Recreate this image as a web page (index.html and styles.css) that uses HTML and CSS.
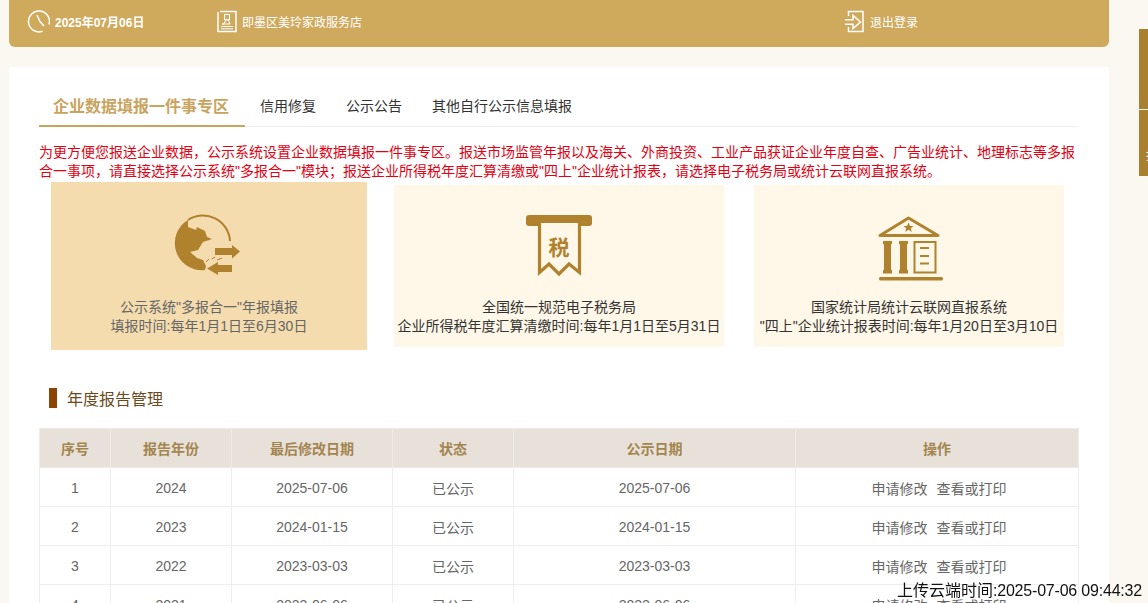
FILE: index.html
```html
<!DOCTYPE html>
<html lang="zh-CN">
<head>
<meta charset="utf-8">
<title>企业数据填报一件事专区</title>
<link rel="stylesheet" href="styles.css">
</head>
<body>
<header class="topbar">
  <div class="top-item top-date">
    <svg class="top-icon" width="24" height="24" viewBox="26 9 24 24"><path d="M49 24.500A10.500 10.500 0 1 0 42.500 31.300" class="line"/><path d="M37 15L40 21.500 44 26" class="line"/></svg>
    <span>2025年07月06日</span>
  </div>
  <div class="top-item top-shop">
    <svg class="top-icon" width="22" height="24" viewBox="216 9 22 24"><path d="M218 12V31.500H236V11.500H220" class="line"/><rect x="224.500" y="14.500" width="5" height="5" class="line-thin"/><path d="M224 24L225.500 20H228.500L230 24H222ZM221 26.500H233M221 28.800H233" class="line-thin"/></svg>
    <span>即墨区美玲家政服务店</span>
  </div>
  <div class="top-item top-exit">
    <svg class="top-icon" width="20" height="24" viewBox="844 9 20 24"><path d="M848.500 16V11.500H863V31.500H848.500V27" class="line"/><path d="M845 19.800H853V15.500L860.500 22 853 28.500V24.200H845" class="line"/></svg>
    <span>退出登录</span>
  </div>
</header>

<main class="panel">
  <nav class="tabs">
    <a class="tab tab-active">企业数据填报一件事专区</a>
    <a class="tab">信用修复</a>
    <a class="tab">公示公告</a>
    <a class="tab">其他自行公示信息填报</a>
  </nav>

  <p class="notice">为更方便您报送企业数据，公示系统设置企业数据填报一件事专区。报送市场监管年报以及海关、外商投资、工业产品获证企业年度自查、广告业统计、地理标志等多报合一事项，请直接选择公示系统"多报合一"模块；报送企业所得税年度汇算清缴或"四上"企业统计报表，请选择电子税务局或统计云联网直报系统。</p>

  <section class="cards">
    <div class="card card-active">
      <svg class="card-icon" width="76" height="68" viewBox="171 213 76 68">
        <path class="gold" d="M188 220A27 27 0 0 0 205 270L206 266 203 260 197 258 190 252 198 250 203 242 212 239 207 237 205 231 197 227 196 230 188 227Z"/>
        <path class="gold-line" d="M188 220A27 27 0 0 1 230 241"/>
        <path class="gold" d="M215 248H232V245L240 251.500 232 258.500V255H215ZM232 265H218V262L207 268.500 218 275V272H232Z"/>
        <path class="gold-thin" d="M206 262L209 259M212 259L215 257M217 260L222 258"/>
      </svg>
      <p class="card-text">公示系统"多报合一"年报填报<br>填报时间:每年1月1日至6月30日</p>
    </div>
    <div class="card card-tax">
      <svg class="card-icon" width="76" height="68" viewBox="521 213 76 68">
        <path class="gold" d="M529 215H589A3 3 0 0 1 592 218V224A3 3 0 0 1 589 226H581V223H538V226H529A3 3 0 0 1 526 224V218A3 3 0 0 1 529 215Z"/>
        <path class="gold-wide" d="M539.500 223V272.500L549 264 559 274 569 264 579.500 272.500V223"/>
        <text x="559" y="255" class="tax-char">税</text>
      </svg>
      <p class="card-text">全国统一规范电子税务局<br>企业所得税年度汇算清缴时间:每年1月1日至5月31日</p>
    </div>
    <div class="card card-stat">
      <svg class="card-icon" width="76" height="68" viewBox="871 213 76 68">
        <path class="gold-roof" d="M880 235.500L908.500 218 938 235.500Z"/>
        <path class="gold" d="M908.500 222.500L910 226H913.500L910.800 228.200 911.800 232 908.500 229.800 905.200 232 906.200 228.200 903.500 226H907ZM883 241H892V244H891V270H892V273.500H883V270H884V244H883ZM899 241H908V244H907V270H908V273.500H899V270H900V244H899ZM880 277H942A2 2 0 0 1 942 280.500H880A2 2 0 0 1 880 277Z"/>
        <path class="gold-line" d="M914.500 242H935.500V272.500H914.500ZM920 248H929M920 256H929M920 263.500H929"/>
      </svg>
      <p class="card-text">国家统计局统计云联网直报系统<br>"四上"企业统计报表时间:每年1月20日至3月10日</p>
    </div>
  </section>

  <h2 class="section-title">年度报告管理</h2>

  <table class="report-table">
    <colgroup>
      <col class="col-no"><col class="col-year"><col class="col-mod"><col class="col-state"><col class="col-pub"><col class="col-act">
    </colgroup>
    <thead>
      <tr><th>序号</th><th>报告年份</th><th>最后修改日期</th><th>状态</th><th>公示日期</th><th>操作</th></tr>
    </thead>
    <tbody>
      <tr><td>1</td><td>2024</td><td>2025-07-06</td><td>已公示</td><td>2025-07-06</td><td class="act-cell"><a class="act">申请修改</a><a class="act">查看或打印</a></td></tr>
      <tr><td>2</td><td>2023</td><td>2024-01-15</td><td>已公示</td><td>2024-01-15</td><td class="act-cell"><a class="act">申请修改</a><a class="act">查看或打印</a></td></tr>
      <tr><td>3</td><td>2022</td><td>2023-03-03</td><td>已公示</td><td>2023-03-03</td><td class="act-cell"><a class="act">申请修改</a><a class="act">查看或打印</a></td></tr>
      <tr><td>4</td><td>2021</td><td>2022-06-06</td><td>已公示</td><td>2022-06-06</td><td class="act-cell"><a class="act">申请修改</a><a class="act">查看或打印</a></td></tr>
    </tbody>
  </table>
</main>

<aside class="side-tabs">
  <div class="side-tab side-one"></div>
  <div class="side-tab side-two">报</div>
</aside>

<div class="stamp">上传云端时间<span class="stamp-time">:2025-07-06 09:44:32</span></div>
</body>
</html>
```

FILE: styles.css
```css
* { box-sizing: border-box; }
html, body { height: 100%; overflow: hidden; }
body {
  margin: 0;
  background: #fbf8f1;
  font-family: "Liberation Sans", "Noto Sans CJK SC", sans-serif;
  font-size: 14px;
  color: #333;
}
p, h2 { margin: 0; }

.topbar {
  display: flex;
  align-items: center;
  width: 1100px;
  height: 47px;
  margin-left: 9px;
  padding: 0 0 5px 17px;
  background: #cfa95c;
  border-radius: 0 0 6px 6px;
  color: #fff;
  font-size: 12px;
}
.top-item { display: flex; align-items: center; }
.top-date { width: 190px; font-weight: 700; gap: 5px; }
.top-shop { width: 628px; gap: 4px; }
.top-exit { gap: 6px; }
.top-icon { display: block; flex: none; }
.line { fill: none; stroke: #fff; stroke-width: 1.5; }
.line-thin { fill: none; stroke: #fff; stroke-width: 1; }

.panel {
  width: 1100px;
  margin: 20px 0 0 9px;
  padding: 20px 30px 0;
  background: #fff;
  border-radius: 3px;
}
.tabs {
  display: flex;
  height: 40px;
  border-bottom: 1px solid #eee;
}
.tab {
  height: 40px;
  margin-left: 30px;
  line-height: 39px;
  font-size: 14px;
  color: #333;
}
.tab-active {
  width: 206px;
  margin: 0 15px 0 0;
  padding-left: 14px;
  border-bottom: 2px solid #c9a45f;
  font-size: 16px;
  font-weight: 700;
  color: #c9a45f;
}
.tab-active + .tab { margin-left: 0; }

.notice {
  margin-top: 16px;
  line-height: 19px;
  color: #e60012;
}

.cards {
  display: flex;
  align-items: center;
  margin: 1px 0 0 12px;
}
.card {
  display: flex;
  flex-direction: column;
  align-items: center;
  height: 162px;
  padding-top: 28px;
  background: #fff7e8;
}
.card-active {
  width: 316px;
  height: 168px;
  padding-top: 31px;
  background: #f5dcae;
}
.card-active .card-text { color: #666; }
.card-tax { width: 330px; margin-left: 27px; }
.card-stat { width: 310px; margin-left: 30px; }
.card-icon { display: block; flex: none; }
.card-text {
  margin-top: 17px;
  line-height: 19px;
  text-align: center;
  white-space: nowrap;
  color: #333;
}
.gold { fill: #b0822e; }
.gold-line { fill: none; stroke: #b0822e; stroke-width: 2; }
.gold-wide { fill: none; stroke: #b0822e; stroke-width: 3.2; }
.gold-roof { fill: none; stroke: #b0822e; stroke-width: 3; stroke-linejoin: round; }
.gold-thin { fill: none; stroke: #b0822e; stroke-width: 1; }
.tax-char {
  font-family: "Noto Sans CJK SC", sans-serif;
  font-size: 21px;
  font-weight: 700;
  text-anchor: middle;
  fill: #b0822e;
}

.section-title {
  margin: 38px 0 0 10px;
  padding-left: 10px;
  height: 20px;
  border-left: 8px solid #8a4506;
  font-size: 16px;
  font-weight: 400;
  line-height: 24px;
  color: #6b4a1c;
}

.report-table {
  width: 1039px;
  margin-top: 20px;
  border-collapse: collapse;
  table-layout: fixed;
  font-size: 14px;
}
.col-no { width: 71px; }
.col-year { width: 121px; }
.col-mod { width: 161px; }
.col-state { width: 121px; }
.col-pub { width: 282px; }
.col-act { width: 283px; }
.report-table th,
.report-table td {
  height: 39px;
  padding: 0;
  text-align: center;
  border: 1px solid #eee;
}
.report-table th {
  background: #e8e1da;
  border-color: #f0ebe5;
  color: #a3854f;
  font-weight: 700;
}
.report-table td { padding-top: 1px; color: #666; }
.report-table .act-cell { padding-left: 4px; }
.act + .act { margin-left: 9px; }

.side-tabs {
  position: fixed;
  top: 29px;
  right: 0;
  width: 9px;
}
.side-tab { background: #a88030; overflow: hidden; color: #fff; font-size: 12px; }
.side-one { height: 81px; border-bottom: 1px solid #fff8ea; }
.side-two { height: 66px; padding: 36px 0 0 7px; white-space: nowrap; }

.stamp {
  position: fixed;
  right: 6px;
  bottom: 3px;
  font-size: 16px;
  line-height: 18px;
  color: #111;
  white-space: nowrap;
}
.stamp-time { letter-spacing: -0.2px; }
```
